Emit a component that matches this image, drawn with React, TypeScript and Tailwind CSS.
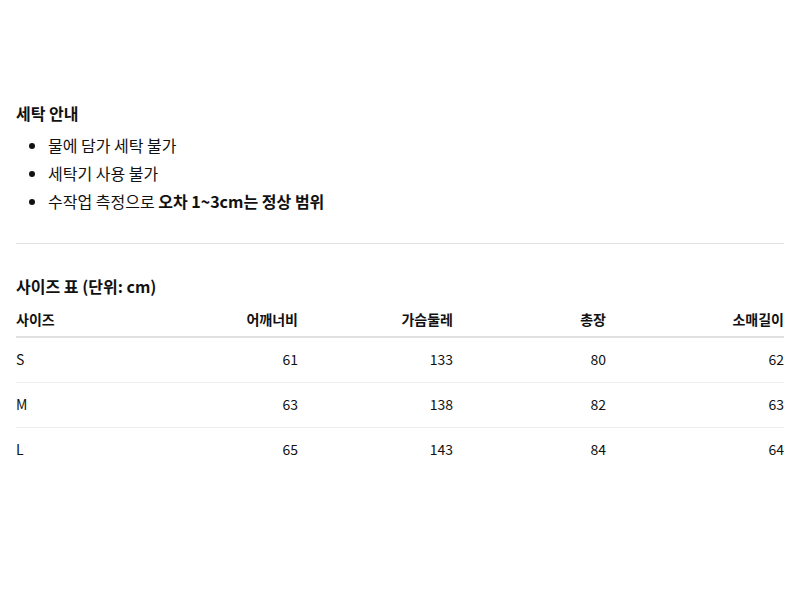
const rows = [
  { size: 'S', shoulder: 61, chest: 133, length: 80, sleeve: 62 },
  { size: 'M', shoulder: 63, chest: 138, length: 82, sleeve: 63 },
  { size: 'L', shoulder: 65, chest: 143, length: 84, sleeve: 64 },
]

export default function App() {
  return (
    <div className="min-h-[600px] bg-white px-4 pt-[100px] text-[#111] font-['Noto_Sans_CJK_KR','Noto_Sans',sans-serif]">
      <section>
        <h3 className="text-base font-bold leading-[26px]">세탁 안내</h3>
        <ul className="mt-[5px] list-disc pl-8 text-[16px] leading-[28px]">
          <li>물에 담가 세탁 불가</li>
          <li>세탁기 사용 불가</li>
          <li>
            수작업 측정으로 <strong className="font-bold">오차 1~3cm는 정상 범위</strong>
          </li>
        </ul>
      </section>

      <hr className="mt-[28px] border-t border-[#e2e2e2]" />

      <section className="mt-[29px]">
        <h3 className="text-base font-bold leading-[26px]">사이즈 표 (단위: cm)</h3>
        <table className="mt-[8px] w-full table-fixed border-collapse text-[14px]">
          <colgroup>
            <col className="w-[130px]" />
            <col className="w-[152px]" />
            <col className="w-[155px]" />
            <col className="w-[153px]" />
            <col className="w-[178px]" />
          </colgroup>
          <thead>
            <tr className="border-b-2 border-[#e0e0e0]">
              <th className="h-[30px] pb-[4px] text-left font-bold">사이즈</th>
              <th className="h-[30px] pb-[4px] text-right font-bold">어깨너비</th>
              <th className="h-[30px] pb-[4px] text-right font-bold">가슴둘레</th>
              <th className="h-[30px] pb-[4px] text-right font-bold">총장</th>
              <th className="h-[30px] pb-[4px] text-right font-bold">소매길이</th>
            </tr>
          </thead>
          <tbody>
            {rows.map((r) => (
              <tr key={r.size} className="border-b border-[#eeeeee] last:border-b-0">
                <td className="h-[45px] text-left">{r.size}</td>
                <td className="h-[45px] text-right">{r.shoulder}</td>
                <td className="h-[45px] text-right">{r.chest}</td>
                <td className="h-[45px] text-right">{r.length}</td>
                <td className="h-[45px] text-right">{r.sleeve}</td>
              </tr>
            ))}
          </tbody>
        </table>
      </section>
    </div>
  )
}
